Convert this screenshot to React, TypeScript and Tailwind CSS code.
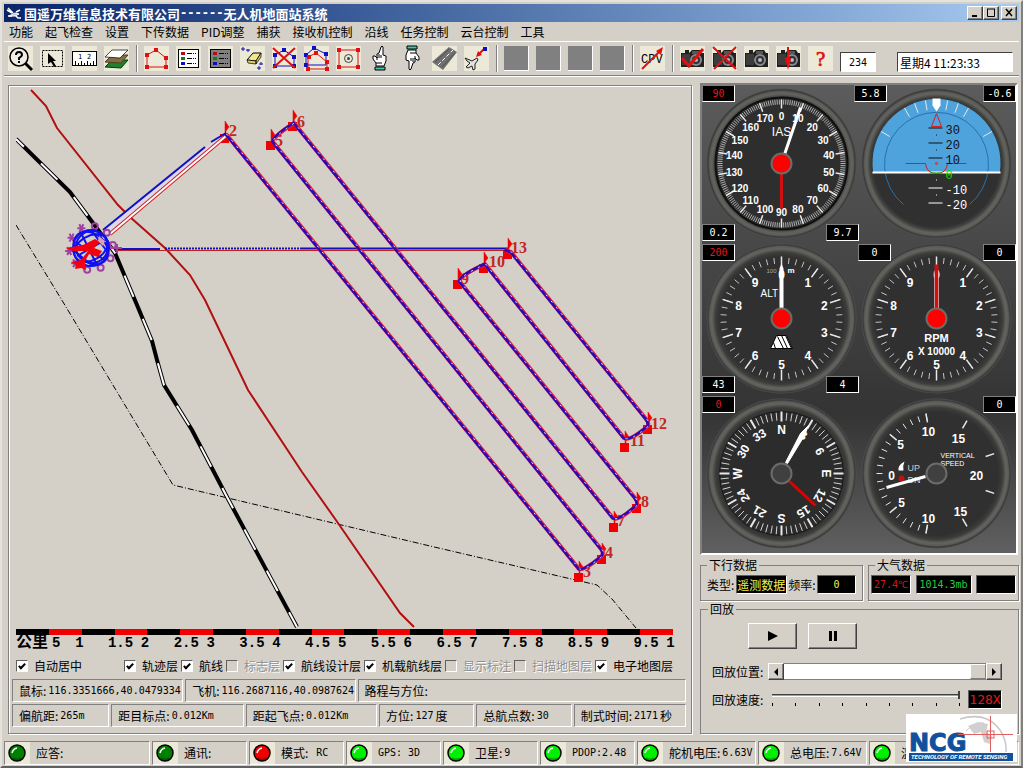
import { useState } from "react";
import type { ReactNode } from "react";
import clsx from "clsx";

const SUNKEN = "border border-t-[#808080] border-l-[#808080] border-b-white border-r-white";
const RAISED = "border border-t-white border-l-white border-b-[#404040] border-r-[#404040] shadow-[inset_-1px_-1px_0_#808080]";
const MONO = "font-['DejaVu_Sans_Mono',monospace] text-[10px]";
const GAUGE_FONT = "font-['Liberation_Sans_Narrow','Liberation_Sans',sans-serif]";

const menuItems = [
  "功能", "起飞检查", "设置", "下传数据", "PID调整", "捕获",
  "接收机控制", "沿线", "任务控制", "云台控制", "工具",
];

const layers = [
  { label: "自动居中", checked: true },
  { label: "轨迹层", checked: true },
  { label: "航线", checked: true },
  { label: "标志层", checked: false, disabled: true },
  { label: "航线设计层", checked: true },
  { label: "机载航线层", checked: true },
  { label: "显示标注", checked: false, disabled: true },
  { label: "扫描地图层", checked: false, disabled: true },
  { label: "电子地图层", checked: true },
];

const statusItems = [
  { label: "应答:", value: "", color: "#008000" },
  { label: "通讯:", value: "", color: "#008000" },
  { label: "模式:", value: "RC", color: "#f00000" },
  { label: "", value: "GPS: 3D", color: "#00f000" },
  { label: "卫星:", value: "9", color: "#00f000" },
  { label: "", value: "PDOP:2.48", color: "#00f000" },
  { label: "舵机电压:", value: "6.63V", color: "#00f000" },
  { label: "总电压:", value: "7.64V", color: "#00f000" },
  { label: "温", value: "", color: "#00f000" },
];

// id, flag position, marker square, label position
const waypoints = [
  { id: 2, x: 225, y: 121, sx: 220, sy: 134, lx: 229, ly: 136 },
  { id: 3, x: 579, y: 561, sx: 574, sy: 573, lx: 583, ly: 577 },
  { id: 4, x: 602, y: 543, sx: 597, sy: 555, lx: 605, ly: 558 },
  { id: 5, x: 271, y: 129, sx: 266, sy: 141, lx: 275, ly: 146 },
  { id: 6, x: 293, y: 110, sx: 288, sy: 122, lx: 297, ly: 127 },
  { id: 7, x: 614, y: 511, sx: 609, sy: 523, lx: 617, ly: 526 },
  { id: 8, x: 637, y: 492, sx: 632, sy: 504, lx: 641, ly: 507 },
  { id: 9, x: 458, y: 268, sx: 453, sy: 280, lx: 461, ly: 284 },
  { id: 10, x: 484, y: 252, sx: 479, sy: 264, lx: 489, ly: 267 },
  { id: 11, x: 625, y: 431, sx: 620, sy: 443, lx: 630, ly: 446 },
  { id: 12, x: 648, y: 412, sx: 643, sy: 425, lx: 651, ly: 429 },
  { id: 13, x: 508, y: 238, sx: 503, sy: 250, lx: 511, ly: 253 },
];

const ROUTE =
  "M226 134L579 569Q584 571 602 556Q604 552 601 549L273 142Q271 138 294 123L613 518Q618 522 637 505Q638 502 635 498L460 282Q457 277 485 264L624 438Q629 442 648 426Q649 422 646 419L511 252L505 250";

const ROAD = "M16 139L70 192L93 223L115 253L137 305L152 341L157 360L164 385L192 430L227 497L297 627";

function polar(r: number, deg: number) {
  const a = ((deg - 90) * Math.PI) / 180;
  return { x: r * Math.cos(a), y: r * Math.sin(a) };
}

function Ticks({ angles, from, to, width = 1 }: { angles: number[]; from: number; to: number; width?: number }) {
  return (
    <g stroke="#e8e8e8" strokeWidth={width}>
      {angles.map((deg) => {
        const a = polar(from, deg);
        const b = polar(to, deg);
        return <line key={deg} x1={a.x} y1={a.y} x2={b.x} y2={b.y} />;
      })}
    </g>
  );
}

const range = (n: number, step: number) => Array.from({ length: n }, (_, i) => i * step);

function Gauge({ id, label, children }: { id: string; label: string; children: ReactNode }) {
  return (
    <svg viewBox="-77.5 -77.5 155 155" className={clsx("block w-full", GAUGE_FONT)} role="img" aria-label={label}>
      <defs>
        <radialGradient id={id}>
          <stop offset="0.82" stopColor="#303030" />
          <stop offset="0.88" stopColor="#3c3c3a" />
          <stop offset="0.93" stopColor="#64645f" />
          <stop offset="0.96" stopColor="#5a5a57" />
          <stop offset="0.98" stopColor="#3a3a3a" />
          <stop offset="1" stopColor="#505050" />
        </radialGradient>
      </defs>
      <circle r="75" fill={`url(#${id})`} />
      {children}
    </svg>
  );
}

function Hub({ red }: { red?: boolean }) {
  return <circle r="10" fill={red ? "#ff0000" : "#404040"} stroke="#6b6b68" strokeWidth="2" />;
}

function AirspeedGauge() {
  return (
    <Gauge id="ias" label="IAS">
      <circle r="66" fill="#2e2e2e" stroke="#101010" strokeWidth="2" />
      <Ticks angles={range(180, 2)} from={59} to={64} width={0.7} />
      <Ticks angles={range(18, 20)} from={55} to={64} width={1.5} />
      <g fill="#fff" fontSize="10" fontWeight="bold" textAnchor="middle">
        {range(18, 10).map((n) => {
          const p = polar(48, n * 2);
          return <text key={n} x={p.x} y={p.y + 4}>{n}</text>;
        })}
        <text y="-28" fontSize="12" fontWeight="normal">IAS</text>
      </g>
      <line x1="3" y1="-9" x2="19" y2="-56" stroke="#fff" strokeWidth="3" />
      <line y1="10" y2="45" stroke="#d01010" strokeWidth="3" />
      <Hub red />
    </Gauge>
  );
}

function AttitudeGauge() {
  return (
    <Gauge id="att" label="Attitude">
      <circle r="64" fill="#303030" />
      <path d="M-63.3 9A64 64 0 1 1 63.3 9Z" fill="#4fa3dc" />
      <path d="M-33 41A52 52 0 1 1 33 41" fill="none" stroke="#2472ae" />
      <Ticks angles={[-60, -30, -20, -10, 10, 20, 30, 60]} from={54} to={64} />
      <line x1="-64" x2="64" y1="9" y2="9" stroke="#fff" strokeWidth="2" />
      <path d="M-4 -65H4V-58L0 -52L-4 -58Z" fill="#fff" />
      <path d="M0 -50L-5 -37H5Z" fill="none" stroke="#d02020" />
      <g stroke="#101010">
        <path d="M-8 -35.500H6M-8 -20.500H6M-8 -5.500H6" />
        <path d="M0 -29V-28M0 -14V-13" />
      </g>
      <path d="M-8 24.500H6M-8 39.500H6M0 16V17M0 31V32" stroke="#fff" />
      <path d="M-31 0H-11Q-10 10 0 10Q10 10 11 0H30" fill="none" stroke="#d02020" />
      <circle r="1" fill="none" stroke="#d02020" />
      <line x1="-7" x2="6" y1="9.500" y2="9.500" stroke="#00c000" />
      <g fontSize="12" className="font-['Liberation_Mono',monospace]">
        <g fill="#101010">
          <text x="9" y="-30">30</text>
          <text x="9" y="-15">20</text>
          <text x="9" y="0">10</text>
        </g>
        <text x="9" y="15" fill="#00e000">0</text>
        <text x="9" y="30" fill="#fff">-10</text>
        <text x="9" y="45" fill="#fff">-20</text>
      </g>
    </Gauge>
  );
}

function TenScale() {
  return (
    <>
      <Ticks angles={range(50, 7.2)} from={55} to={61} width={0.8} />
      <Ticks angles={range(10, 36)} from={51} to={62} width={1.5} />
      <g fill="#fff" fontSize="12" fontWeight="bold" textAnchor="middle">
        {range(10, 1).map((n) => {
          const p = polar(45, n * 36);
          return <text key={n} x={p.x} y={p.y + 5}>{n}</text>;
        })}
      </g>
    </>
  );
}

function AltitudeGauge() {
  return (
    <Gauge id="alt" label="ALT">
      <TenScale />
      <text x="-21" y="-22" fill="#fff" fontSize="10">ALT</text>
      <text x="-15" y="-46" fill="#aaa" fontSize="6">100</text>
      <text x="6" y="-46" fill="#fff" fontSize="8" fontWeight="bold">m</text>
      <path d="M-5 17H5L11 30H-11Z" fill="#fff" stroke="#000" />
      <path d="M-4 18L2 30M0 17L6 30M4 17L10 30M-8 24L-6 30" stroke="#000" />
      <path d="M-2 -10V-50L0 -55L2 -50V-10Z" fill="#fff" />
      <Hub red />
    </Gauge>
  );
}

function RpmGauge() {
  return (
    <Gauge id="rpm" label="RPM">
      <TenScale />
      <g fill="#fff" fontSize="11" fontWeight="bold" textAnchor="middle">
        <text y="23">RPM</text>
        <text y="36" fontSize="10">X 10000</text>
      </g>
      <path d="M-2 -10V-54H2V-10Z" fill="#d01010" />
      <path d="M2 -10V-48M-2 -10V-44" stroke="#e8c8c8" strokeWidth="0.700" />
      <Hub red />
    </Gauge>
  );
}

const compassLabels = ["N", "3", "6", "E", "12", "15", "S", "21", "24", "W", "30", "33"];

function CompassGauge() {
  return (
    <Gauge id="compass" label="Compass">
      <circle r="62" fill="#2c2c2c" stroke="#181818" />
      <Ticks angles={range(72, 5)} from={53} to={61} width={0.9} />
      <Ticks angles={range(12, 30)} from={52} to={62} width={2} />
      <g fill="#fff" fontSize="12" fontWeight="bold" textAnchor="middle">
        {compassLabels.map((l, i) => (
          <text key={l} y="-40" transform={`rotate(${i * 30})`}>{l}</text>
        ))}
      </g>
      <path d="M4 -11L6 -10L23 -38L27 -48L19 -40Z" fill="#fff" stroke="#fff" />
      <line x1="8" y1="8" x2="34" y2="32" stroke="#e00000" strokeWidth="3" />
      <Hub />
    </Gauge>
  );
}

const speedLabels: [string, number, number][] = [
  ["0", -45, 6], ["5", -36, -25], ["10", -8, -38], ["15", 22, -31],
  ["20", 40, 6], ["5", -35, 33], ["10", -8, 49], ["15", 24, 42],
];

function VerticalSpeedGauge() {
  return (
    <Gauge id="vs" label="Vertical speed">
      <Ticks angles={range(21, 8).map((a) => a - 170)} from={54} to={60} />
      <Ticks angles={[-130, -50, -10, -170, 30, 71, 109, 150]} from={52} to={61} width={1.5} />
      <g fill="#fff" fontSize="12" fontWeight="bold" textAnchor="middle">
        {speedLabels.map(([l, x, y], i) => <text key={i} x={x} y={y}>{l}</text>)}
      </g>
      <g fill="#fff" fontSize="7">
        <text x="4" y="-16">VERTICAL</text>
        <text x="4" y="-8">SPEED</text>
        <text x="-29" y="-3" fontSize="9" fill="#ccc">UP</text>
        <text x="-29" y="9" fontSize="9" fill="#ccc">DN</text>
      </g>
      <path d="M-32 -12Q-39 -8 -38 -3H-33Q-34 -8 -32 -12Z" fill="#fff" />
      <circle cx="-35" cy="5" r="3" fill="#c01010" />
      <line x1="-11" y1="3" x2="-50" y2="14" stroke="#fff" strokeWidth="3" />
      <Hub />
    </Gauge>
  );
}

function Readout({ className, children }: { className: string; children: ReactNode }) {
  return (
    <output
      className={clsx(
        "absolute flex h-[17px] w-[33px] items-center justify-center border border-t-[#808080] border-l-[#808080] border-b-white border-r-white bg-black leading-none",
        "font-['DejaVu_Sans_Mono',monospace] text-[10px]",
        className,
      )}
    >
      {children}
    </output>
  );
}

function Instruments() {
  return (
    <section className="relative mr-px grid grid-cols-2 border-2 border-t-[#808080] border-l-[#808080] border-b-white border-r-white bg-linear-to-b from-[#5c5c5c] via-[#343434] via-70% to-[#606060] px-0.5 pt-px pb-0.5 text-white">
      <AirspeedGauge />
      <AttitudeGauge />
      <AltitudeGauge />
      <RpmGauge />
      <CompassGauge />
      <VerticalSpeedGauge />
      <Readout className="top-0 left-0 text-[#e01818]">90</Readout>
      <Readout className="top-0 left-[152px]">5.8</Readout>
      <Readout className="top-0 right-0">-0.6</Readout>
      <Readout className="top-[139px] left-0">0.2</Readout>
      <Readout className="top-[139px] left-[124px]">9.7</Readout>
      <Readout className="top-[159px] left-0 text-[#e01818]">200</Readout>
      <Readout className="top-[159px] left-[156px]">0</Readout>
      <Readout className="top-[159px] right-0">0</Readout>
      <Readout className="top-[291px] left-0">43</Readout>
      <Readout className="top-[291px] left-[124px]">4</Readout>
      <Readout className="top-[311px] left-0 text-[#e01818]">0</Readout>
      <Readout className="top-[311px] right-0">0</Readout>
    </section>
  );
}

function Camera() {
  return (
    <g>
      <path d="M1 7H5V4H9V7L12 4H20L22 7H24V21H1Z" fill="#202020" />
      <path d="M2 8H10V19H2Z" fill="#3c3c3c" />
      <path d="M12 5H19V8H12Z" fill="#555" />
      <circle cx="16" cy="14" r="6" fill="#888" />
      <circle cx="16" cy="14" r="4" fill="#303038" />
      <circle cx="16" cy="14" r="2" fill="#b8b8c8" />
    </g>
  );
}

function Nodes({ points, color }: { points: [number, number][]; color: string }) {
  return (
    <g fill={color}>
      {points.map(([x, y]) => <rect key={`${x}-${y}`} x={x - 2} y={y - 2} width="4" height="4" />)}
    </g>
  );
}

function ListIcon({ bg }: { bg: string }) {
  return (
    <>
      <rect x="2.500" y="3.500" width="20" height="18" fill={bg} stroke="#000" />
      <path d="M5 6H9V9H5Z" fill="#b01010" />
      <path d="M5 11H9V14H5Z" fill="#108010" />
      <path d="M5 16H9V19H5Z" fill="#1010b0" />
      <path d="M11 7.500H20M11 12.500H20M11 17.500H20" stroke="#000" strokeDasharray="5 1 1 1" />
    </>
  );
}

function Hand() {
  return (
    <g>
      <path d="M8 20V17L5 13V10H7L9 12V8L11 7L13 1Q14 -1 15 1V9L18 10V15L16 20Z" fill="#fff" stroke="#000" />
      <path d="M9 11V14M11 8V12M13 9V12M8 17H14" stroke="#000" />
      <path d="M7 21H17V24H7Z" fill="#40c8b0" stroke="#000" />
    </g>
  );
}

const HOUSE = "M3 20V9L12 4L22 11V20Z";

const toolIcons: { name: string; icon: ReactNode; bg?: string }[][] = [
  [
    {
      name: "查询",
      icon: (
        <>
          <path d="M17 17L24 24" stroke="#000" strokeWidth="3" />
          <circle cx="11" cy="11" r="9" fill="#f0eee4" stroke="#000" strokeWidth="1.500" />
          <path d="M8 9Q8 6 11 6Q14 6 14 9Q14 10 11 12V14M11 15V17" fill="none" stroke="#000" strokeWidth="2" />
        </>
      ),
    },
    {
      name: "选择",
      icon: (
        <>
          <rect x="2.500" y="4.500" width="20" height="16" fill="none" stroke="#000" strokeDasharray="2 1" />
          <path d="M8 7L16 15H13L16 20L14 21L11 16L8 18Z" fill="#000" />
        </>
      ),
    },
    {
      name: "测距",
      icon: (
        <>
          <rect x="0.500" y="5.500" width="24" height="14" fill="#fff" stroke="#000" />
          <path d="M3.500 15V20M6.500 17V20M9.500 15V20M12.500 17V20M15.500 15V20M18.500 17V20M21.500 15V20" stroke="#000" />
          <text x="6" y="13" fontSize="7" className="font-['DejaVu_Sans_Mono']">1</text>
          <text x="15" y="13" fontSize="7" className="font-['DejaVu_Sans_Mono']">2</text>
        </>
      ),
    },
    {
      name: "图层",
      icon: (
        <>
          <path d="M1 21L8 14H24L17 22Z" fill="#208030" stroke="#004000" />
          <path d="M1 16L8 9H24L17 17Z" fill="#807040" stroke="#504020" />
          <path d="M1 11L8 4H24L16 12Z" fill="#fff" stroke="#000" strokeWidth="0.700" />
        </>
      ),
    },
  ],
  [
    {
      name: "航线区域",
      icon: (
        <>
          <path d="M3 21V9L12 4L22 12V21Z" fill="none" stroke="#e01010" />
          <Nodes color="#e01010" points={[[3, 21], [3, 9], [12, 4], [22, 12], [22, 21]]} />
        </>
      ),
    },
    { name: "航点列表", icon: <ListIcon bg="#fff" /> },
    { name: "航点列表2", icon: <ListIcon bg="#808080" /> },
    {
      name: "清除",
      icon: (
        <>
          <path d="M7 14L13 7H21L16 15Z" fill="#f0e890" stroke="#000" />
          <path d="M7 14L16 15V18L8 17ZM16 15L21 7V11L16 18Z" fill="#e0d070" stroke="#000" strokeWidth="0.700" />
          <path d="M3 1V5M1 3H5M8 3V6M6 4H10M21 16V19M19 18H23M19 20V24M17 22H21" stroke="#1010b0" />
        </>
      ),
    },
    {
      name: "删除航线",
      icon: (
        <>
          <path d={HOUSE} fill="none" stroke="#1010c0" />
          <Nodes color="#1010c0" points={[[3, 20], [3, 9], [12, 4], [22, 11], [22, 20]]} />
          <path d="M1 2L23 22M23 2L1 22" stroke="#e01010" strokeWidth="2" />
        </>
      ),
    },
    {
      name: "复制航线",
      icon: (
        <>
          <path d="M2 19V9L10 2L22 8V19Z" fill="none" stroke="#1010c0" />
          <Nodes color="#1010c0" points={[[2, 19], [2, 9], [10, 2], [22, 8]]} />
          <path d="M4 23V11L12 7L23 16V23Z" fill="none" stroke="#e01010" />
          <Nodes color="#e01010" points={[[4, 23], [5, 11], [12, 7], [23, 16], [23, 23]]} />
        </>
      ),
    },
    {
      name: "中心点",
      icon: (
        <>
          <rect x="3" y="4" width="19" height="17" fill="none" stroke="#e01010" />
          <Nodes color="#e01010" points={[[3, 4], [22, 4], [3, 21], [22, 21]]} />
          <circle cx="12.500" cy="12.500" r="4" fill="none" stroke="#404040" />
          <circle cx="12.500" cy="12.500" r="1.500" fill="#404040" />
        </>
      ),
    },
    { name: "起飞", icon: <Hand />, bg: "bg-transparent" },
    { name: "降落", icon: <g transform="rotate(180 12 12)"><Hand /></g>, bg: "bg-transparent" },
    {
      name: "跑道",
      icon: (
        <>
          <path d="M0 16L17 1L25 6L11 24Z" fill="#707070" />
          <path d="M6 19L21 4" stroke="#fff" strokeDasharray="4 2" />
          <path d="M3 16L17 3M10 21L23 7" stroke="#404040" strokeWidth="0.700" />
        </>
      ),
    },
    {
      name: "飞向目标",
      icon: (
        <>
          <path d="M14 9L20 3" stroke="#e01010" strokeWidth="2" />
          <path d="M12 11L14 5L18 9Z" fill="#e01010" />
          <path d="M19 1H23V5H19Z" fill="#1010c0" />
          <path d="M13 12L8 15L1 12L3 15L6 17L2 21L4 22L8 20L9 24L11 23L11 18L14 14Z" fill="#e0e0e0" stroke="#202020" />
        </>
      ),
    },
  ],
  [1, 2, 3, 4].map((n) => ({ name: `备用${n}`, icon: null, bg: "bg-[#808080] border-r border-b border-white" })),
  [
    {
      name: "CPV",
      icon: (
        <>
          <text x="1" y="17" fontSize="12" className="font-['Liberation_Mono',monospace]">CPV</text>
          <path d="M2 23L20 5" stroke="#e01010" strokeWidth="2" />
          <path d="M16 5L23 1L21 9Z" fill="#e01010" />
        </>
      ),
    },
  ],
  [
    { name: "拍照", icon: <><Camera /><path d="M2 12L9 20L23 3" fill="none" stroke="#e01010" strokeWidth="3" /></> },
    { name: "停止拍照", icon: <><Camera /><path d="M1 1L24 23M24 1L2 23" stroke="#e01010" strokeWidth="2" /></> },
    { name: "相机", icon: <Camera /> },
    { name: "定点拍照", icon: <><Camera /><path d="M12 1V16M10 13H14L12 20Z" fill="#e01010" stroke="#e01010" strokeWidth="2" /></> },
    {
      name: "帮助",
      icon: <text x="8" y="20" fontSize="21" fill="#e01010" stroke="#e01010" strokeWidth="0.700" className="font-['Liberation_Serif',serif]">?</text>,
    },
  ],
];

function Toolbar() {
  return (
    <div className="flex items-center gap-[7px] border-t border-b border-t-white border-b-[#808080] py-[3px] pl-1 shadow-[0_1px_0_#fff]">
      {toolIcons.map((group, g) => (
        <div key={g} className="flex items-center gap-[7px]">
          {g > 0 && <span className="h-[27px] w-px bg-[#808080] shadow-[1px_0_0_#fff]" />}
          {group.map(({ name, icon, bg }) => (
            <button key={name} type="button" aria-label={name} className={clsx("h-[25px] w-[25px] shrink-0", bg ?? "bg-[#ece9d8]")}>
              <svg viewBox="0 0 25 25" className="h-full w-full overflow-visible">{icon}</svg>
            </button>
          ))}
        </div>
      ))}
      <input
        aria-label="编号"
        defaultValue="234"
        className={clsx("h-5 w-9 self-end border border-t-[#404040] border-l-[#404040] border-b-white border-r-white bg-white text-center", MONO)}
      />
      <input
        aria-label="时间"
        defaultValue="星期4 11:23:33"
        className="ml-3.5 h-5 w-[116px] self-end border border-t-[#404040] border-l-[#404040] border-b-white border-r-white bg-white px-0.5 font-['Noto_Sans_CJK_SC',sans-serif] text-xs"
      />
    </div>
  );
}

function TitleBar() {
  const btn = clsx("flex h-3.5 w-4 items-center justify-center bg-[#d4d0c8]", RAISED);
  return (
    <header className="flex h-[18px] items-center bg-linear-to-r from-[#0a246a] to-[#a6caf0] pr-0.5 pl-0.5 text-white">
      <svg viewBox="0 0 16 16" className="mr-0.5 h-4 w-4" stroke="#fff" fill="none">
        <path d="M2 3L7 8M1 5L6 8M10 7L14 5M8 9L12 13H15M6 11H2" strokeWidth="1.500" />
        <path d="M3 11L9 8L13 9L9 11Z" fill="#b8c8d8" />
      </svg>
      <h1 className="flex items-center text-[13px] leading-none font-bold">
        国遥万维信息技术有限公司
        <span className="font-['DejaVu_Sans_Mono',monospace] text-xs">------</span>
        无人机地面站系统
      </h1>
      <div className="ml-auto flex text-black">
        <button type="button" aria-label="最小化" className={btn}>
          <svg viewBox="0 0 10 10" className="h-2.5 w-2.5"><path d="M2 8H7" stroke="#000" strokeWidth="2" /></svg>
        </button>
        <button type="button" aria-label="最大化" className={btn}>
          <svg viewBox="0 0 10 10" className="h-2.5 w-2.5"><path d="M1 1H9M1.500 1V8.500H8.500V1" fill="none" stroke="#000" /></svg>
        </button>
        <button type="button" aria-label="关闭" className={clsx(btn, "ml-0.5")}>
          <svg viewBox="0 0 10 10" className="h-2.5 w-2.5"><path d="M2 1L8 8M8 1L2 8" stroke="#000" strokeWidth="1.500" /></svg>
        </button>
      </div>
    </header>
  );
}

function HomeCluster() {
  const marks = range(10, 36);
  return (
    <g transform="translate(91 248)">
      <g fill="none" stroke="#a040a0" strokeWidth="2">
        {marks.map((deg) => {
          const p = polar(22, deg + 10);
          return deg > 180
            ? <path key={deg} d={`M${p.x - 4} ${p.y}H${p.x + 4}M${p.x - 2} ${p.y - 4}L${p.x + 2} ${p.y + 4}M${p.x + 2} ${p.y - 4}L${p.x - 2} ${p.y + 4}`} />
            : <circle key={deg} cx={p.x} cy={p.y} r="3" />;
        })}
      </g>
      <g fill="none" stroke="#1010f0" strokeWidth="2">
        <circle r="18" />
        <circle r="16" cx="1" cy="-1" />
        <ellipse rx="19" ry="14" transform="rotate(40)" />
        <ellipse rx="18" ry="12" transform="rotate(-30)" />
        <path d="M-16 -6L14 12M-10 -15L6 17M-14 8L16 -9M0 -18L18 6M-18 2L2 18" />
      </g>
      <path d="M-25 0L-8 -3L4 -9L9 -6L3 0L11 3L7 9L-2 6L-6 13L-5 22L-10 20L-16 21L-15 17L-20 14L-10 12L-3 3L-18 3Z" fill="#f00010" />
      <path d="M8 -12L14 -7L12 -2L7 -7Z" fill="#e0a0b0" />
      <path d="M19 0H31M26 -4V5" stroke="#a040a0" strokeWidth="2" />
    </g>
  );
}

function FlightMap() {
  return (
    <svg viewBox="16 87 657 542" className="block w-full" role="img" aria-label="航线地图">
      <path d="M16 225L63 302L173 485L430 546L597 585L612 599L636 628" fill="none" stroke="#000" strokeDasharray="6 2 1 2" />
      <path d={ROAD} fill="none" stroke="#000" strokeWidth="4" />
      <path d={ROAD} fill="none" stroke="#fff" strokeWidth="2" strokeDasharray="23 24" strokeDashoffset="12" />
      <path
        d="M31 90L46 106L57 128L118 205L130 217L165 248L190 275L205 300L248 390L302 472L338 523L400 613L414 627"
        fill="none"
        stroke="#b01010"
        strokeWidth="2"
      />

      {waypoints.map((w) => (
        <g key={w.id} fill="#f00000">
          <rect x={w.sx} y={w.sy} width="9" height="9" />
          <path d={`M${w.x} ${w.y}L${w.x + 4} ${w.y + 6}L${w.x + 1} ${w.y + 10}V${w.y + 15}H${w.x}Z`} stroke="#f00000" strokeWidth="0.500" />
        </g>
      ))}
      <g fill="#c02820" fontSize="16" fontWeight="bold" className="font-['Liberation_Serif',serif]">
        {waypoints.map((w) => <text key={w.id} x={w.lx} y={w.ly}>{w.id}</text>)}
      </g>

      <path d="M104 230L218 138L226 135L112 233Z" fill="#dcd8ec" />
      <path d="M110 234L226 136" stroke="#d02020" strokeWidth="4" />
      <path d="M110 234L226 136" stroke="#fff" strokeWidth="2" />
      <path d="M103 230L205 147M211 142L226 133" stroke="#1010c0" strokeWidth="2" />

      <path d="M115 250.500H508" stroke="#c02020" />
      <path d="M115 249H160" stroke="#1010c0" strokeWidth="2" />
      <path d="M165 248.500H302" stroke="#1010c0" strokeWidth="2" strokeDasharray="2 1" />
      <path d="M302 248.500H508" stroke="#1010c0" strokeWidth="2" />

      <path d={ROUTE} fill="none" stroke="#e02040" strokeWidth="4" />
      <path d={ROUTE} fill="none" stroke="#2808b8" strokeWidth="2.500" transform="translate(-0.5 0)" />
      <path d={ROUTE} fill="none" stroke="#fff" strokeWidth="0.900" strokeDasharray="2 6" transform="translate(0.5 0)" />

      <HomeCluster />
    </svg>
  );
}

function ScaleBar() {
  const labels = Array.from({ length: 18 }, (_, i) => String((i + 2) / 2));
  return (
    <div>
      <div className="flex h-1.5">
        {range(20, 1).map((i) => (
          <span key={i} className={clsx("flex-1", i % 2 ? "bg-[#f00000]" : "bg-black")} />
        ))}
      </div>
      <div className="flex font-['Liberation_Mono','Noto_Sans_CJK_SC',monospace] text-sm leading-4 font-bold">
        <span className="flex w-[9%] shrink-0 gap-1 leading-4">
          <span className="text-base leading-4">公里</span>5
        </span>
        {labels.map((l) => <span key={l} className="w-[5%] shrink-0">{l}</span>)}
        <span>1</span>
      </div>
    </div>
  );
}

function Field({ label, value }: { label: string; value?: string }) {
  return (
    <div className={clsx("flex h-[23px] min-w-0 items-center gap-0.5 overflow-hidden pl-1.5 whitespace-nowrap", SUNKEN)}>
      <span>{label}</span>
      {value && <span className={MONO}>{value}</span>}
    </div>
  );
}

function MapPanel() {
  return (
    <section className="mt-0.5 min-w-0 flex-1 self-start border border-[#808080] shadow-[inset_1px_1px_0_#fff,1px_1px_0_#fff]">
      <div className="pt-px pr-[18px] pl-[7px]">
        <FlightMap />
        <ScaleBar />
      </div>
      <div className="mt-2 flex h-3.5 items-center gap-[3px] pl-[7px]">
        {layers.map((l, i) => (
          <label
            key={l.label}
            className={clsx("flex shrink-0 items-center gap-1.5", i === 0 && "w-[105px]", l.disabled && "text-[#909090] [text-shadow:1px_1px_0_#fff]")}
          >
            <input
              type="checkbox"
              defaultChecked={l.checked}
              disabled={l.disabled}
              className={clsx(
                "flex h-3 w-3 appearance-none items-center justify-center border border-t-[#606060] border-l-[#606060] border-b-white border-r-white",
                "checked:after:mb-0.5 checked:after:h-[7px] checked:after:w-1 checked:after:rotate-45 checked:after:border-r-2 checked:after:border-b-2 checked:after:border-black checked:after:content-['']",
                l.disabled ? "bg-[#d4d0c8]" : "bg-white",
              )}
            />
            {l.label}
          </label>
        ))}
      </div>
      <div className="mt-1.5 mr-[5px] mb-1.5 ml-[3px] flex flex-col gap-0.5">
        <div className="grid grid-cols-[171fr_170fr_328fr] gap-0.5">
          <Field label="鼠标:" value="116.3351666,40.0479334" />
          <Field label="飞机:" value="116.2687116,40.0987624" />
          <Field label="路程与方位:" />
        </div>
        <div className="grid grid-cols-[97fr_132fr_131fr_95fr_95fr_112fr] gap-0.5">
          <Field label="偏航距:" value="265m" />
          <Field label="距目标点:" value="0.012Km" />
          <Field label="距起飞点:" value="0.012Km" />
          <div className={clsx("flex h-[23px] items-center gap-0.5 pl-1.5", SUNKEN)}>
            <span>方位:</span><span className={MONO}>127</span><span>度</span>
          </div>
          <Field label="总航点数:" value="30" />
          <div className={clsx("flex h-[23px] items-center gap-0.5 pl-1.5", SUNKEN)}>
            <span>制式时间:</span><span className={MONO}>2171</span><span>秒</span>
          </div>
        </div>
      </div>
    </section>
  );
}

const GROUP = "min-w-0 border border-[#808080] shadow-[1px_1px_0_#fff]";
const LCD = "flex h-[19px] items-center justify-center overflow-hidden border border-t-[#606060] border-l-[#606060] border-b-white border-r-white bg-black leading-none";

function Playback() {
  const [playing, setPlaying] = useState(false);
  const btn = clsx("flex h-[26px] w-[49px] items-center justify-center", RAISED);
  const arrow = clsx("flex h-[17px] w-4 shrink-0 items-center justify-center bg-[#d4d0c8]", RAISED);
  return (
    <fieldset className={clsx("mt-0.5 flex-1 pr-4 pl-[11px]", GROUP)}>
      <legend className="-ml-1 px-0.5 leading-3">回放</legend>
      <div className="mt-2 flex gap-[11px] pl-9">
        <button type="button" aria-label="播放" aria-pressed={playing} onClick={() => setPlaying(true)} className={btn}>
          <svg viewBox="0 0 12 12" className="h-3 w-3"><path d="M1 1L11 6L1 11Z" /></svg>
        </button>
        <button type="button" aria-label="暂停" onClick={() => setPlaying(false)} className={btn}>
          <svg viewBox="0 0 12 12" className="h-3 w-3"><path d="M2 1H5V11H2ZM7 1H10V11H7Z" /></svg>
        </button>
      </div>
      <div className="mt-3.5 flex items-center">
        <label htmlFor="pos" className="w-14 shrink-0 whitespace-nowrap">回放位置:</label>
        <button type="button" aria-label="后退" className={arrow}>
          <svg viewBox="0 0 8 8" className="h-2 w-2"><path d="M6 0L2 4L6 8Z" /></svg>
        </button>
        <input
          id="pos"
          type="range"
          defaultValue="100"
          className="h-[17px] min-w-0 flex-1 appearance-none border-t border-b border-[#808080] bg-white [&::-webkit-slider-thumb]:h-[15px] [&::-webkit-slider-thumb]:w-4 [&::-webkit-slider-thumb]:appearance-none [&::-webkit-slider-thumb]:border [&::-webkit-slider-thumb]:border-t-white [&::-webkit-slider-thumb]:border-r-[#808080] [&::-webkit-slider-thumb]:border-b-[#808080] [&::-webkit-slider-thumb]:border-l-white [&::-webkit-slider-thumb]:bg-[#d4d0c8]"
        />
        <button type="button" aria-label="前进" className={arrow}>
          <svg viewBox="0 0 8 8" className="h-2 w-2"><path d="M2 0L6 4L2 8Z" /></svg>
        </button>
      </div>
      <div className="mt-2.5 flex items-center">
        <label htmlFor="speed" className="w-[60px] shrink-0 whitespace-nowrap">回放速度:</label>
        <div className="min-w-0 flex-1">
          <input
            id="speed"
            type="range"
            min="0"
            max="8"
            defaultValue="8"
            className="block h-[3px] w-full appearance-none border-t border-b border-t-[#404040] border-b-white bg-[#a0a0a0] [&::-webkit-slider-thumb]:h-2 [&::-webkit-slider-thumb]:w-0.5 [&::-webkit-slider-thumb]:appearance-none [&::-webkit-slider-thumb]:bg-[#404040]"
          />
          <div className="mt-1.5 flex justify-between">
            {range(9, 1).map((i) => <span key={i} className="h-[3px] w-px bg-black" />)}
          </div>
        </div>
        <output htmlFor="speed" className={clsx(LCD, "ml-2 w-[34px] font-['DejaVu_Sans_Mono',monospace] text-[13px] text-[#e01818]")}>128X</output>
      </div>
    </fieldset>
  );
}

function SidePanel() {
  return (
    <aside className="flex w-[319px] shrink-0 flex-col">
      <Instruments />
      <div className="mt-1 grid grid-cols-[163fr_151fr] gap-[5px]">
        <fieldset className={clsx("flex items-center px-1.5 pb-1.5", GROUP)}>
          <legend className="px-0.5 leading-3">下行数据</legend>
          <div className="mt-1 flex w-full items-center justify-between">
            <span>类型:</span>
            <output className={clsx(LCD, "w-[51px] text-[#f0f050]")}>遥测数据</output>
            <span>频率:</span>
            <output className={clsx(LCD, MONO, "w-[39px] text-[#f0f050]")}>0</output>
          </div>
        </fieldset>
        <fieldset className={clsx("px-0.5 pb-1.5", GROUP)}>
          <legend className="ml-1 px-0.5 leading-3">大气数据</legend>
          <div className="mt-1 flex justify-between">
            <output className={clsx(LCD, MONO, "w-10 text-[#d01818]")}>27.4℃</output>
            <output className={clsx(LCD, MONO, "w-14 text-[#20d040]")}>1014.3mb</output>
            <output className={clsx(LCD, "w-10")} />
          </div>
        </fieldset>
      </div>
      <Playback />
    </aside>
  );
}

function Led({ color }: { color: string }) {
  return (
    <svg viewBox="0 0 25 22" className="h-[22px] w-[25px] shrink-0 bg-[#ece9d8]">
      <circle cx="12" cy="11" r="8" fill={color} stroke="#000" strokeWidth="1.500" />
      <path d="M7 11Q8 7 12 6" fill="none" stroke="#fff" strokeWidth="1.500" />
      <path d="M8 16Q12 19 16 16" fill="none" stroke="#000" strokeOpacity="0.3" strokeWidth="2" />
    </svg>
  );
}

function StatusBar() {
  return (
    <footer className="mt-[7px] grid grid-cols-[146fr_95fr_95fr_95fr_95fr_95fr_119fr_109fr_150fr] gap-0.5">
      {statusItems.map((s) => (
        <div key={s.color + s.label + s.value} className={clsx("flex h-6 min-w-0 items-center overflow-hidden whitespace-nowrap", SUNKEN)}>
          <Led color={s.color} />
          {s.label && <span className="ml-1.5">{s.label}</span>}
          {s.value && <span className={clsx(MONO, s.label ? (s.value === "RC" ? "ml-2" : "ml-0.5") : "ml-1.5")}>{s.value}</span>}
        </div>
      ))}
    </footer>
  );
}

function CompanyLogo() {
  return (
    <svg viewBox="0 0 111 48" className="absolute right-1 bottom-1 h-12 w-[111px] bg-white" role="img" aria-label="NCG">
      <g fill="none" stroke="#c8c8c8">
        <path d="M54 5Q80 -3 94 16Q101 27 100 38" strokeWidth="1.500" />
        <path d="M60 17Q68 8 78 9" />
      </g>
      <path d="M62 12L72 8L82 10L80 18L86 22L84 30L78 28L75 18L68 20Z" fill="#d0d0d0" />
      <text x="3" y="37" fill="#10509c" stroke="#10509c" fontSize="24" fontWeight="bold" className="font-['DejaVu_Sans',sans-serif]">NCG</text>
      <g fill="none" stroke="#e06060">
        <path d="M84.500 2V38M52 20.500H107" />
        <rect x="81" y="17" width="7" height="7" />
      </g>
      <rect x="3" y="39" width="104" height="8" fill="#10509c" />
      <text x="5" y="45" fill="#fff" fontSize="6" fontWeight="bold" fontStyle="italic" className="font-['Roboto',sans-serif]">
        TECHNOLOGY OF REMOTE SENSING
      </text>
    </svg>
  );
}

export default function App() {
  return (
    <div className="relative flex min-h-screen flex-col border-2 border-t-[#e4e2dc] border-l-[#e4e2dc] border-b-[#606060] border-r-[#808080] bg-[#d4d0c8] p-0.5 pb-0 font-['Noto_Sans_CJK_SC',sans-serif] text-xs leading-3 text-black">
      <TitleBar />
      <nav className="flex h-[19px] items-center gap-3 pl-[5px]">
        {menuItems.map((m) => <button key={m} type="button">{m}</button>)}
      </nav>
      <Toolbar />
      <main className="flex gap-2 pt-[7px] pl-1">
        <MapPanel />
        <SidePanel />
      </main>
      <StatusBar />
      <CompanyLogo />
    </div>
  );
}
